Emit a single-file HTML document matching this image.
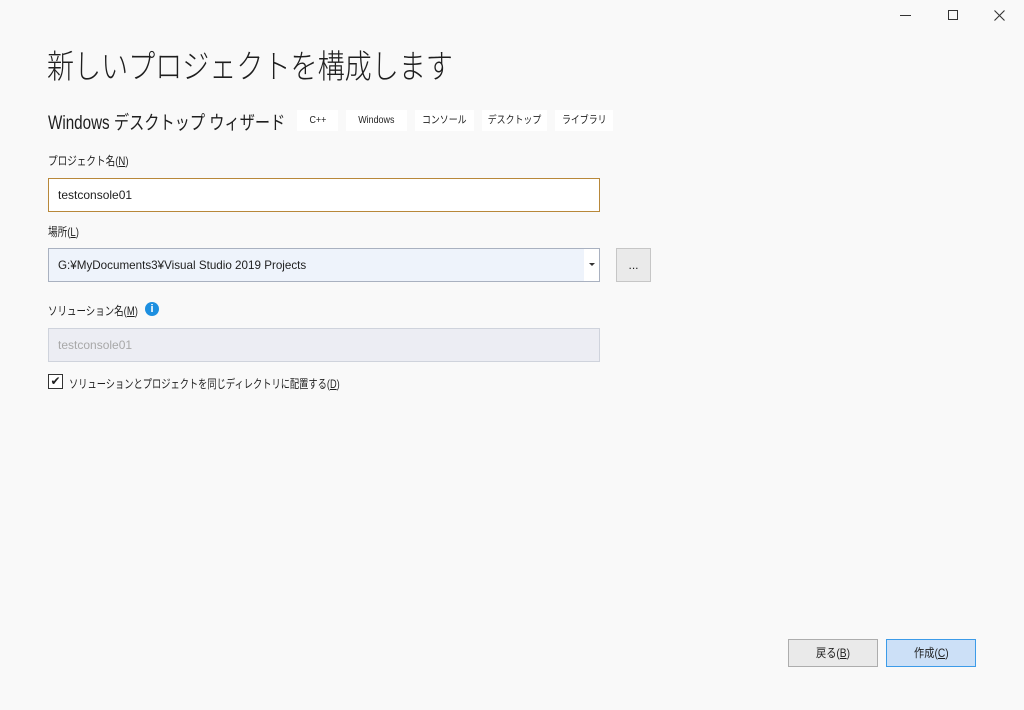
<!DOCTYPE html>
<html><head><meta charset="utf-8"><style>
*{box-sizing:border-box;margin:0;padding:0}
body{width:1024px;height:710px;background:#f9f9f9;font-family:"Liberation Sans","Noto Sans CJK JP",sans-serif;color:#1e1e1e;position:relative;overflow:hidden;font-size:12px}
.a{position:absolute;white-space:nowrap}
.s{display:inline-block;transform-origin:left center;white-space:nowrap}
.tag{position:absolute;top:110px;height:21px;background:#fff;font-size:10.5px;line-height:21px;text-align:center;white-space:nowrap;overflow:hidden}
.tag span{display:inline-block;transform:scaleX(0.85)}
.box{position:absolute;border:1px solid #ccced6;height:34px;font-size:12px;line-height:32px;padding-left:9px;white-space:nowrap}
u{text-decoration:underline}
</style></head><body>
<div class="a" style="left:900px;top:15px;width:11px;height:1px;background:#333"></div>
<div class="a" style="left:948px;top:10px;width:10px;height:10px;border:1px solid #333"></div>
<svg class="a" style="left:994px;top:10px" width="11" height="11"><path d="M0.5 0.5L10.5 10.5M10.5 0.5L0.5 10.5" stroke="#333" stroke-width="1.1"/></svg>
<div class="a" style="left:47px;top:40px;font-size:33px;font-weight:300"><span class="s" style="transform:scaleX(0.82)">新しいプロジェクトを構成します</span></div>
<div class="a" style="left:48px;top:108px;font-size:19px"><span class="s" style="transform:scaleX(0.8)">Windows デスクトップ ウィザード</span></div>
<div class="tag" style="left:297px;width:41px"><span>C++</span></div>
<div class="tag" style="left:346px;width:61px"><span>Windows</span></div>
<div class="tag" style="left:415px;width:59px"><span>コンソール</span></div>
<div class="tag" style="left:482px;width:65px"><span>デスクトップ</span></div>
<div class="tag" style="left:555px;width:58px"><span>ライブラリ</span></div>
<div class="a" style="left:48px;top:152px"><span class="s" style="transform:scaleX(0.8)">プロジェクト名(<u>N</u>)</span></div>
<div class="box" style="left:48px;top:178px;width:552px;border-color:#b8883a;background:#fff">testconsole01</div>
<div class="a" style="left:48px;top:223px"><span class="s" style="transform:scaleX(0.8)">場所(<u>L</u>)</span></div>
<div class="box" style="left:48px;top:248px;width:552px;background:#eef3fb;border-color:#a9b1c0"><span class="s" style="transform:scaleX(0.97)">G:¥MyDocuments3¥Visual Studio 2019 Projects</span></div>
<div class="a" style="left:584px;top:249px;width:15px;height:32px;background:#fff"></div>
<div class="a" style="left:589px;top:263px;border:3px solid transparent;border-top:3px solid #333"></div>
<div class="box" style="left:616px;top:248px;width:35px;background:#eaeaea;border-color:#c6c6c6;text-align:center;padding:0">...</div>
<div class="a" style="left:48px;top:302px"><span class="s" style="transform:scaleX(0.79)">ソリューション名(<u>M</u>)</span></div>
<div class="a" style="left:145px;top:302px;width:14px;height:14px;border-radius:50%;background:#1d8fe0;color:#fff;font-size:11px;font-weight:bold;text-align:center;line-height:14px">i</div>
<div class="box" style="left:48px;top:328px;width:552px;background:#ecedf3;border-color:#cfd3dc;color:#a8a8a8">testconsole01</div>
<div class="a" style="left:48px;top:374px;width:15px;height:15px;border:1px solid #333;background:#fff;font-size:12px;line-height:13px;text-align:center">✔</div>
<div class="a" style="left:69px;top:375px"><span class="s" style="transform:scaleX(0.77)">ソリューションとプロジェクトを同じディレクトリに配置する(<u>D</u>)</span></div>
<div class="box" style="left:788px;top:639px;width:90px;height:28px;line-height:26px;background:#eaeaea;border-color:#adadad;text-align:center;padding:0"><span style="display:inline-block;transform:scaleX(0.85)">戻る(<u>B</u>)</span></div>
<div class="box" style="left:886px;top:639px;width:90px;height:28px;line-height:26px;background:#cce0f7;border-color:#3c9be8;text-align:center;padding:0"><span style="display:inline-block;transform:scaleX(0.85)">作成(<u>C</u>)</span></div>
</body></html>
